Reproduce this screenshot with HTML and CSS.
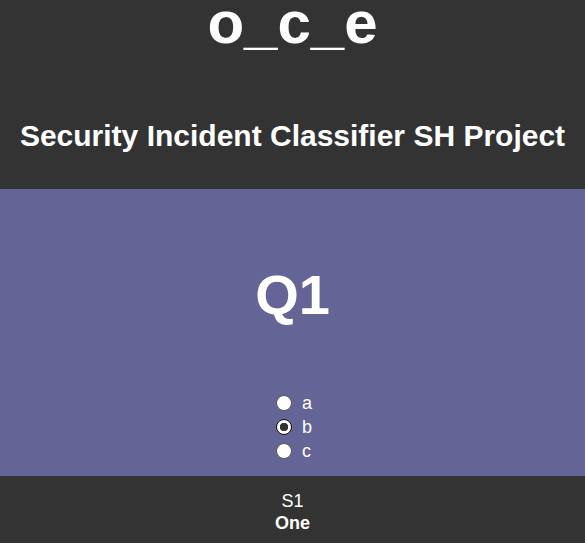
FILE: index.html
```html
<!DOCTYPE html>
<html lang="en">
<head>
<meta charset="utf-8">
<title>o_c_e</title>
<link rel="stylesheet" href="styles.css">
</head>
<body>
<header class="top">
  <h1 class="brand">o_c_e</h1>
  <h2 class="subtitle">Security Incident Classifier SH Project</h2>
</header>
<main class="question">
  <h2 class="q-title">Q1</h2>
  <form class="options">
    <label class="option"><input type="radio" name="q1" value="a"><span>a</span></label>
    <label class="option"><input type="radio" name="q1" value="b" checked><span>b</span></label>
    <label class="option"><input type="radio" name="q1" value="c"><span>c</span></label>
  </form>
</main>
<footer class="bottom">
  <div class="step">S1</div>
  <div class="step-name">One</div>
</footer>
</body>
</html>
```

FILE: styles.css
```css
html, body {
  margin: 0;
  padding: 0;
}
body {
  font-family: "Liberation Sans", Arial, sans-serif;
  color: #ffffff;
  background: #333333;
}
.top {
  background: #333333;
  text-align: center;
  padding: 0 0 36px;
}
.brand {
  margin: 0;
  font-size: 60px;
  line-height: 46px;
  font-weight: bold;
}
.subtitle {
  margin: 72px 0 0;
  font-size: 30px;
  line-height: 35px;
  font-weight: bold;
}
.question {
  background: #646496;
  padding: 74px 0 13px;
  text-align: center;
}
.q-title {
  margin: 0;
  font-size: 56px;
  line-height: 64px;
  font-weight: bold;
}
.options {
  margin: 64px auto 0;
  display: flex;
  flex-direction: column;
  align-items: center;
}
.option {
  display: flex;
  align-items: center;
  height: 24px;
  font-size: 18px;
  line-height: 24px;
  width: 33px;
}
.option input {
  appearance: none;
  -webkit-appearance: none;
  flex: none;
  width: 16px;
  height: 16px;
  margin: 0 10px 0 0;
  border: 1px solid #555555;
  border-radius: 50%;
  background: #ffffff;
  box-sizing: border-box;
}
.option input:checked {
  border-color: #111111;
  background: radial-gradient(circle, #333333 0 4px, #ffffff 4.5px);
}
.bottom {
  background: #333333;
  text-align: center;
  padding: 14px 0 9px;
  font-size: 18px;
  line-height: 22px;
}
.step-name {
  font-weight: bold;
}
```
